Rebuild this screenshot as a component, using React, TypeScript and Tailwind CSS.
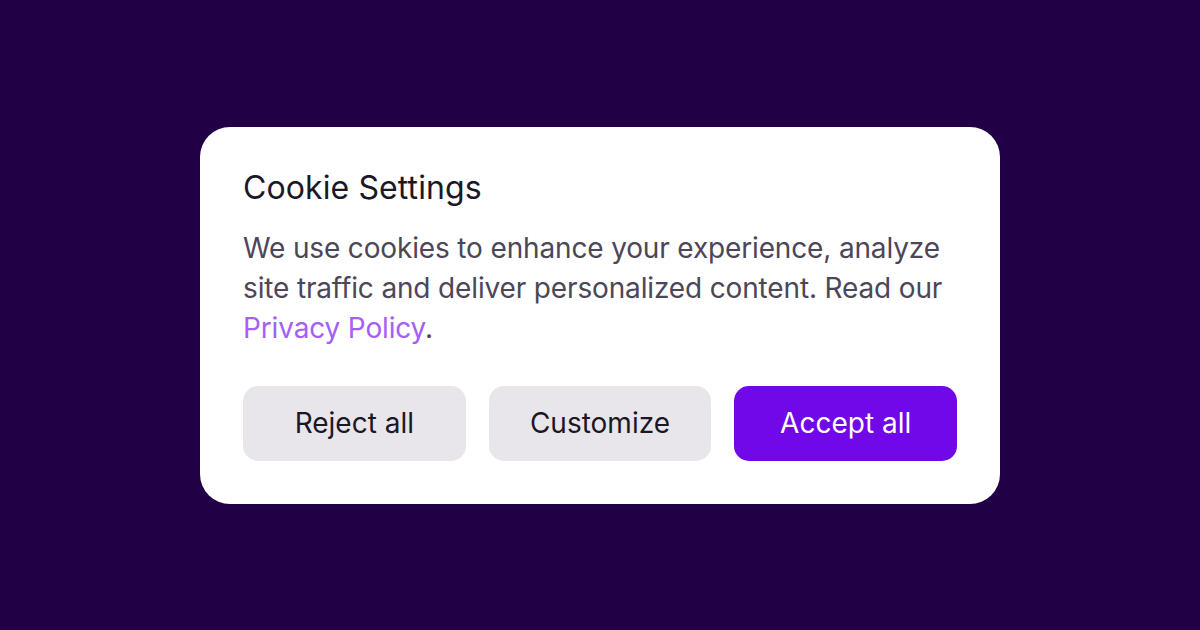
export default function App() {
  return (
    <div className="w-[1200px] h-[630px] bg-[#220045] flex items-center justify-center" style={{ fontFamily: "Inter, 'Open Sans', sans-serif" }}>
      <div className="w-[800px] bg-white rounded-[30px] pt-[41px] pb-[43px] px-[43px]">
        <h1 className="text-[32px] leading-[40px] text-[#1c1726] tracking-[0.1px]">Cookie Settings</h1>
        <p className="mt-[20px] text-[28px] leading-[40px] text-[#4c4657] tracking-[-0.15px]">
          We use cookies to enhance your experience, analyze site traffic and deliver personalized content. Read our{" "}
          <span className="text-[#a55ef6]">Privacy Policy</span>.
        </p>
        <div className="mt-[38px] grid grid-cols-3 gap-[23px]">
          <button className="h-[75px] rounded-[15px] bg-[#e8e6eb] text-[#1c1726] text-[28px]">Reject all</button>
          <button className="h-[75px] rounded-[15px] bg-[#e8e6eb] text-[#1c1726] text-[28px]">Customize</button>
          <button className="h-[75px] rounded-[15px] bg-[#7008e7] text-white text-[28px]">Accept all</button>
        </div>
      </div>
    </div>
  );
}
